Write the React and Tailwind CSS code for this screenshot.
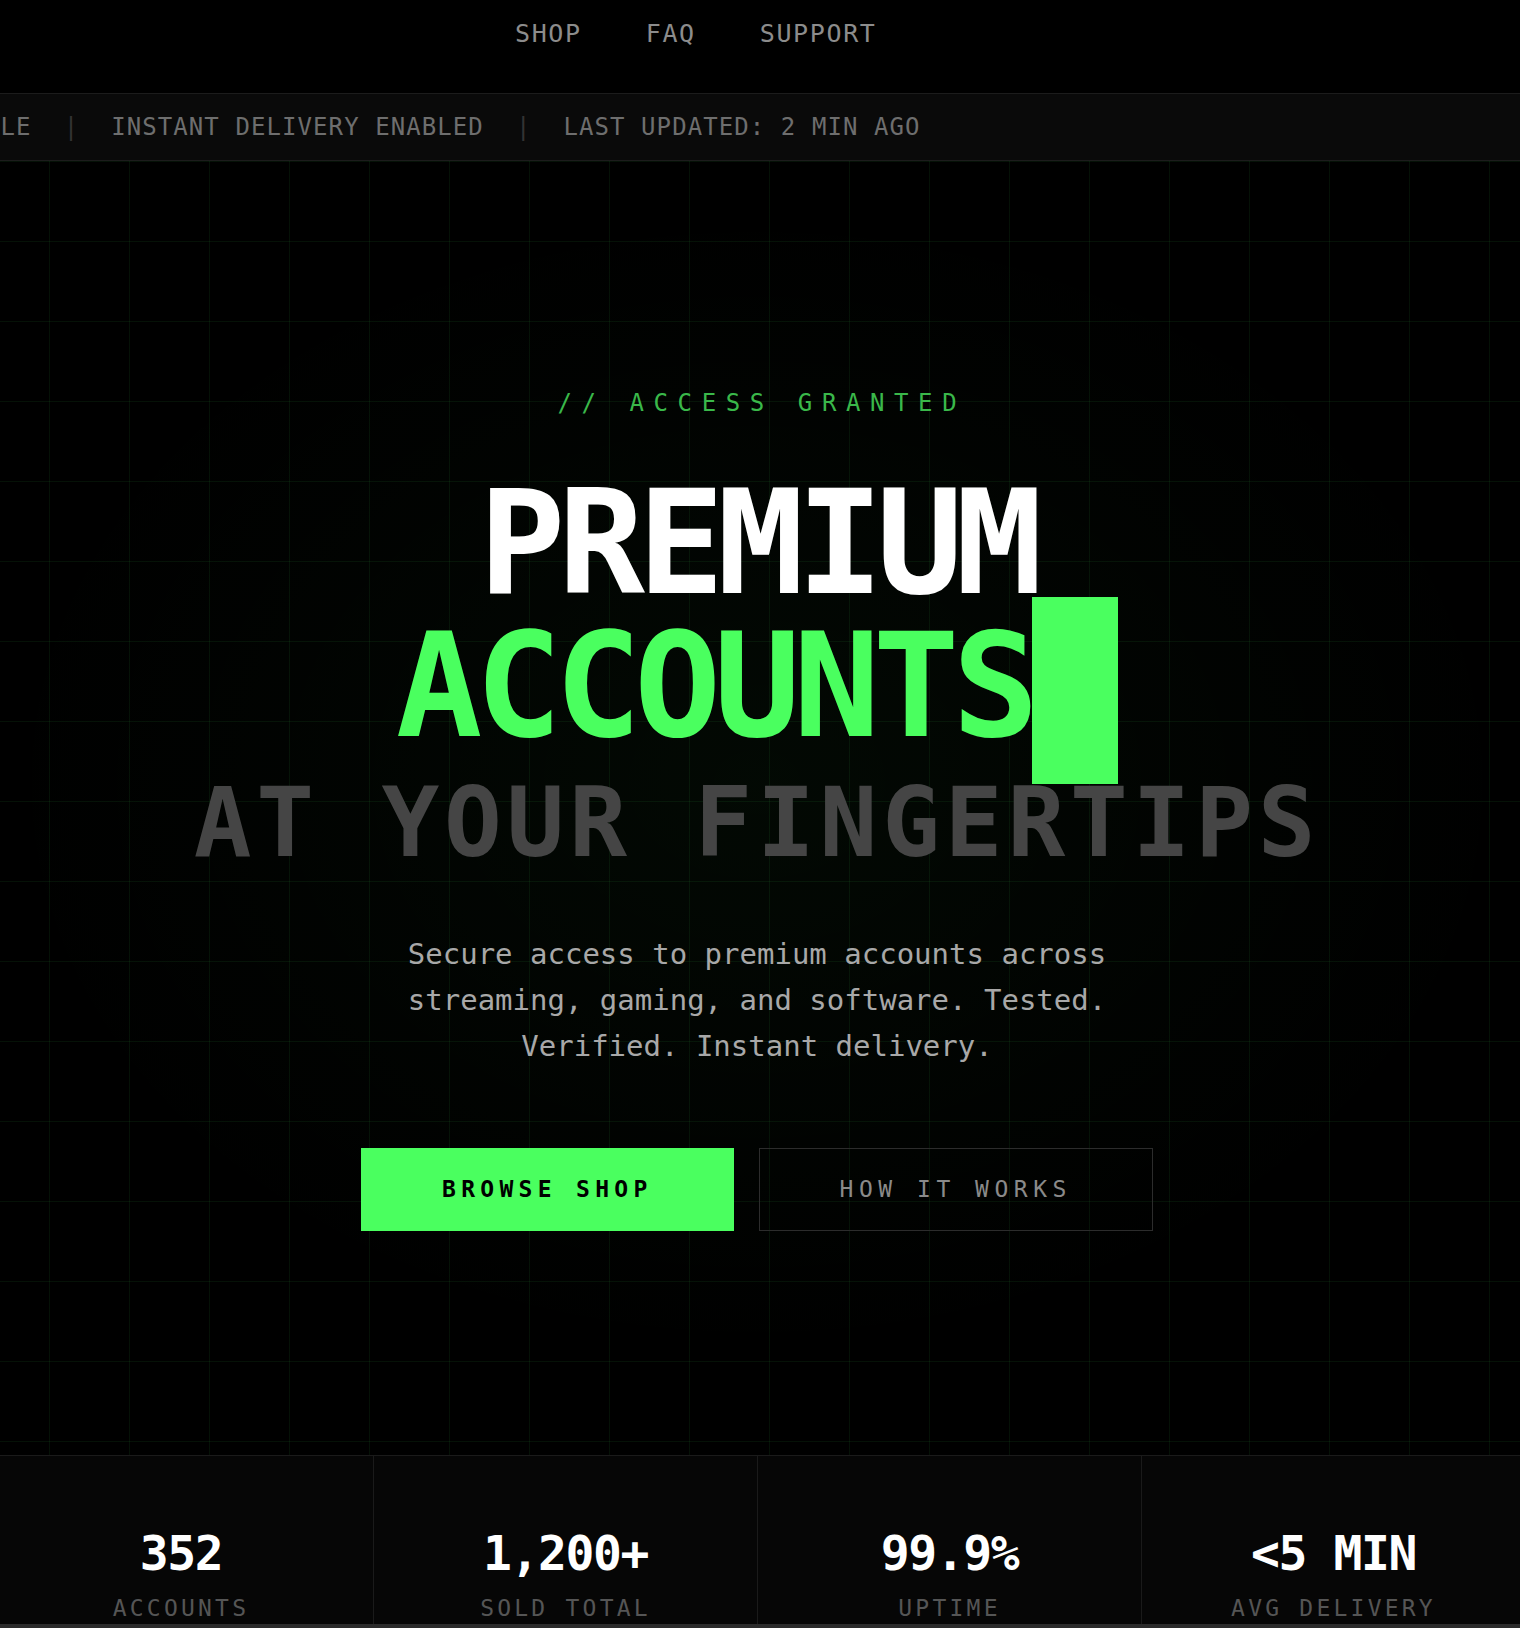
const mono = "font-['DejaVu_Sans_Mono','Liberation_Mono',monospace]";

const navLinks = ["SHOP", "FAQ", "SUPPORT"];

const tickerItems = [
  "352 ACCOUNTS AVAILABLE",
  "INSTANT DELIVERY ENABLED",
  "LAST UPDATED: 2 MIN AGO",
];

const stats = [
  { value: "352", label: "ACCOUNTS" },
  { value: "1,200+", label: "SOLD TOTAL" },
  { value: "99.9%", label: "UPTIME" },
  { value: "<5 MIN", label: "AVG DELIVERY" },
];

function Header() {
  return (
    <header className="h-[93px] pl-[526px] pt-[21px]">
      <nav className="flex gap-16 text-[25px] leading-[25px] tracking-[0.065em] text-[#8c8c8c]">
        {navLinks.map((link) => (
          <a key={link} href="#" className="hover:text-white">
            {link}
          </a>
        ))}
      </nav>
    </header>
  );
}

function Ticker() {
  return (
    <div className="h-[68px] border-y border-[#1c1c1c] bg-[#0a0a0a] flex items-center overflow-hidden">
      <div className="flex whitespace-nowrap ml-[-299px] text-[24px] leading-[24px] tracking-[0.045em] text-[#6e6e6e]">
        {tickerItems.map((item, i) => (
          <span key={item} className="flex">
            {i > 0 && <span className="mx-8 text-[#333333]">|</span>}
            <span>{item}</span>
          </span>
        ))}
      </div>
    </div>
  );
}

function Hero() {
  return (
    <section className="h-[1294px] bg-black bg-[linear-gradient(to_right,rgba(74,255,96,0.065)_1px,transparent_1px),linear-gradient(to_bottom,rgba(74,255,96,0.065)_1px,transparent_1px)] bg-[size:80px_80px] bg-[position:60px_0]">
      <div className="h-full pt-[6px] flex flex-col items-center justify-center text-center bg-[radial-gradient(ellipse_50%_45%_at_50%_48%,rgba(74,255,96,0.035),transparent)]">
        <p className="text-[24px] leading-[24px] tracking-[0.4em] text-[#3ab84a] pl-[0.4em]">
          // ACCESS GRANTED
        </p>

        <h1 className="mt-[58px] font-bold whitespace-nowrap">
          <span className="block text-[144px] leading-[141px] tracking-[-0.05em] text-white">
            PREMIUM
          </span>
          <span className="block text-[144px] leading-none tracking-[-0.05em] text-[#4aff5f]">
            ACCOUNTS
            {/* block cursor, kept out of the line box via negative margins */}
            <span className="inline-block w-[0.6em] h-[187px] mt-[-139px] mb-[-48px] bg-[#4aff5f]" />
          </span>
          <span className="block mt-[17px] text-[96px] leading-none tracking-[0.05em] text-[#454545]">
            AT YOUR FINGERTIPS
          </span>
        </h1>

        <p className="mt-[60px] w-[740px] text-[29px] leading-[46px] text-[#a8a8a8]">
          Secure access to premium accounts across streaming, gaming, and
          software. Tested. Verified. Instant delivery.
        </p>

        <div className="mt-[79px] flex gap-[25px]">
          <a
            href="#"
            className="px-20 py-[30px] border border-[#4aff5f] bg-[#4aff5f] text-black font-bold text-[23px] leading-[21px] tracking-[0.23em]"
          >
            BROWSE SHOP
          </a>
          <a
            href="#"
            className="px-20 py-[30px] border border-[#2c2c2c] text-[#8a8a8a] text-[23px] leading-[21px] tracking-[0.24em]"
          >
            HOW IT WORKS
          </a>
        </div>
      </div>
    </section>
  );
}

function Stats() {
  return (
    <div className="border-t border-[#1a1a1a] bg-[#060606]">
      <div className="grid grid-cols-4">
        {stats.map((s, i) => (
          <div
            key={s.label}
            className={
              i > 0
                ? "h-[168px] pt-[73px] flex flex-col items-center border-l border-[#1a1a1a]"
                : "h-[168px] pt-[73px] flex flex-col items-center"
            }
          >
            <span className="text-[48px] leading-none font-bold tracking-[-0.03em] text-white">
              {s.value}
            </span>
            <span className="mt-5 text-[23px] leading-none tracking-[0.14em] text-[#555555]">
              {s.label}
            </span>
          </div>
        ))}
      </div>
      <div className="h-[4px] bg-[#2b2b2b]" />
    </div>
  );
}

export default function App() {
  return (
    <div className="min-h-screen w-full overflow-hidden bg-black">
      <div className={`w-[1536px] ml-[-11px] ${mono}`}>
        <Header />
        <Ticker />
        <Hero />
        <Stats />
      </div>
    </div>
  );
}
